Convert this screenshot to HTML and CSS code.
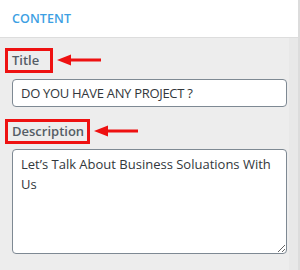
FILE: index.html
```html
<!DOCTYPE html>
<html>
<head>
<meta charset="utf-8">
<link rel="stylesheet" href="styles.css">
</head>
<body>
<div class="sidebar">
  <div class="header"><span class="tab">CONTENT</span></div>
  <div class="body">
    <div class="content">
      <div class="field">
        <div class="label-row">
          <span class="label label-title">Title</span>
          <svg class="arrow" width="46" height="12" viewBox="0 0 46 12"><polygon points="0,6 14,0.5 14,11.5" fill="#ee1111"/><rect x="13" y="4.5" width="31" height="3" fill="#ee1111"/></svg>
        </div>
        <input class="input" type="text" value="DO YOU HAVE ANY PROJECT ?">
      </div>
      <div class="field">
        <div class="label-row">
          <span class="label label-desc">Description</span>
          <svg class="arrow" width="46" height="12" viewBox="0 0 46 12"><polygon points="0,6 14,0.5 14,11.5" fill="#ee1111"/><rect x="13" y="4.5" width="31" height="3" fill="#ee1111"/></svg>
        </div>
        <textarea class="textarea">Let’s Talk About Business Soluations With Us</textarea>
      </div>
    </div>
    <div class="track"></div>
  </div>
</div>
</body>
</html>
```
FILE: styles.css
```css
html, body {
  margin: 0;
  padding: 0;
}
body {
  width: 300px;
  height: 270px;
  background: #ededed;
  font-family: "Open Sans", "Noto Sans", sans-serif;
  overflow: hidden;
}
.sidebar {
  width: 298px;
  height: 270px;
  border-right: 2px solid #dcdcdc;
  display: flex;
  flex-direction: column;
}
.header {
  height: 37px;
  background: #ffffff;
  border-bottom: 1px solid #dddddd;
  display: flex;
  align-items: center;
  padding-left: 12px;
}
.tab {
  color: #3d9fe3;
  font-size: 12.5px;
  font-weight: 600;
  letter-spacing: 0.1px;
}
.body {
  flex: 1;
  display: flex;
}
.content {
  width: 289px;
  padding-top: 10px;
  box-sizing: border-box;
}
.track {
  width: 9px;
  background: #e8e8e8;
}
.field {
  display: flex;
  flex-direction: column;
}
.field + .field {
  margin-top: 12px;
}
.label-row {
  display: flex;
  align-items: center;
  padding-left: 5px;
}
.label {
  border: 3px solid #ee1111;
  padding: 0 4px;
  color: #555d66;
  font-size: 13px;
  font-weight: 600;
  line-height: 19px;
}
.label-title {
  width: 34px;
}
.label-desc {
  width: 71px;
}
.arrow {
  margin-left: 4px;
  margin-top: -2px;
}
.input, .textarea {
  margin-left: 12px;
  width: 275px;
  box-sizing: border-box;
  border: 1px solid #7e8993;
  border-radius: 4px;
  background: #ffffff;
  color: #32373c;
  font-family: "Open Sans", "Noto Sans", sans-serif;
  font-size: 13px;
  padding: 0 8px;
  outline: none;
}
.input {
  margin-top: 6px;
  height: 28px;
  letter-spacing: -0.3px;
}
.textarea {
  margin-top: 5px;
  height: 105px;
  padding: 4px 8px;
  line-height: 20px;
  resize: vertical;
}
```
